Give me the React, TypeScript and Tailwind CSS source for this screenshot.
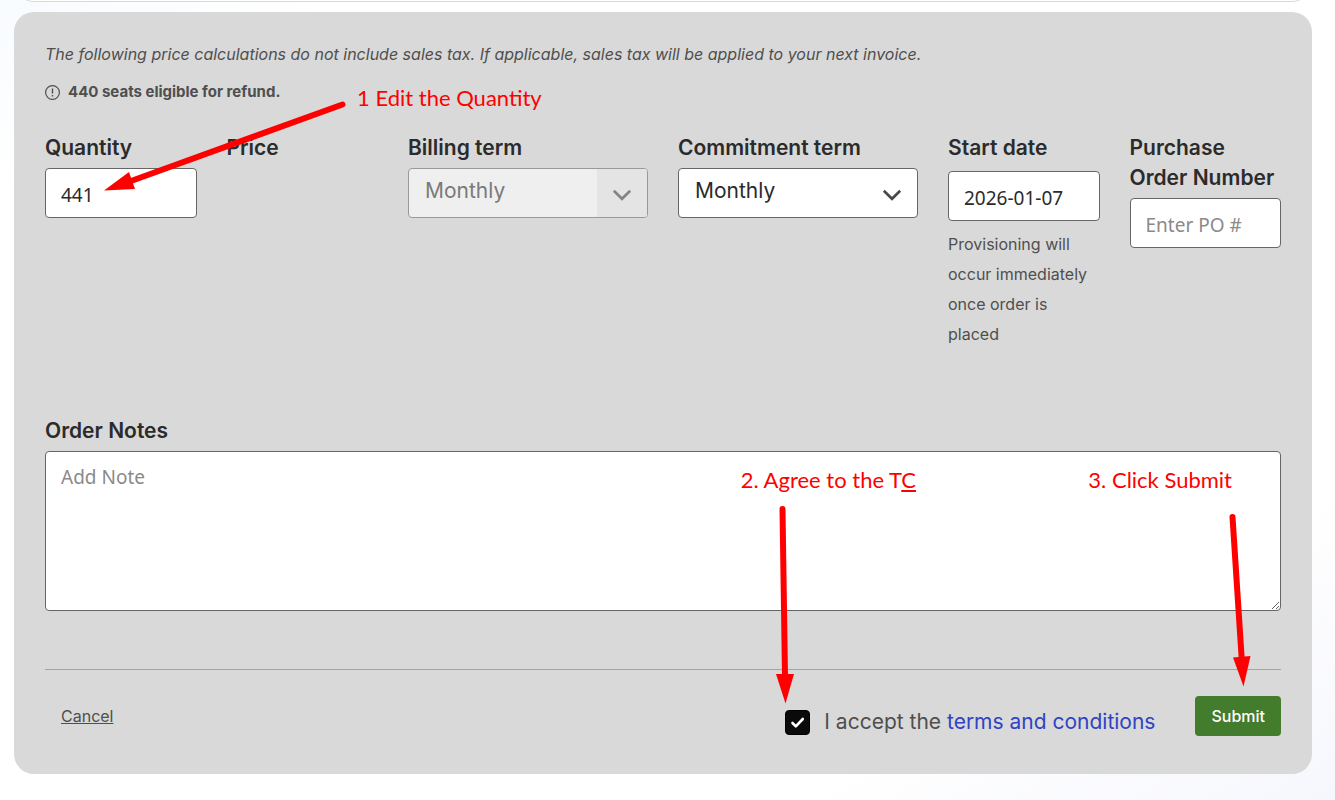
import { useState } from 'react'
import type { ReactNode } from 'react'

const inputClass =
  "h-[50px] w-full rounded border border-[#666] bg-white px-[15px] pt-[3px] font-['Noto_Sans',sans-serif] text-[19px] text-[#2b2b2b] placeholder:text-[#8a8a8a]"

function Field({ id, label, children }: { id: string; label: string; children?: ReactNode }) {
  return (
    <div className="flex min-w-0 flex-col gap-[5px]">
      <label htmlFor={id} className="text-[21px] leading-[30px] font-semibold text-[#2b2b2b]">
        {label}
      </label>
      {children}
    </div>
  )
}

function TermSelect({ id, disabled = false }: { id: string; disabled?: boolean }) {
  return (
    <div
      className={
        disabled
          ? 'relative flex h-[50px] overflow-hidden rounded border border-[#999] bg-[#efefef]'
          : 'relative flex h-[50px] overflow-hidden rounded border border-[#666] bg-white'
      }
    >
      <select
        id={id}
        disabled={disabled}
        defaultValue="monthly"
        className="w-full appearance-none px-4 pb-1 text-[21px] text-[#2b2b2b] disabled:text-[#7a7a7a] disabled:opacity-100"
      >
        <option value="monthly">Monthly</option>
        <option value="annual">Annual</option>
      </select>
      <span
        className={
          disabled
            ? 'pointer-events-none absolute inset-y-0 right-0 flex w-[50px] items-center justify-center bg-[#e4e4e4] pt-1 text-[#858585]'
            : 'pointer-events-none absolute inset-y-0 right-0 flex w-[50px] items-center justify-center pt-1 text-[#4a4a4a]'
        }
      >
        <svg width="20" height="12" viewBox="0 0 20 12" fill="none" aria-hidden="true">
          <path d="M1.800 1.800 10 9.800l8.200-8" stroke="currentColor" strokeWidth="2.700" />
        </svg>
      </span>
    </div>
  )
}

function Steps() {
  const text = "absolute font-['Lato',sans-serif] text-[22px] leading-[28px] whitespace-nowrap text-[#f00]"
  return (
    <div className="pointer-events-none absolute inset-0">
      <p className={`${text} top-[72px] left-[343px]`}>1 Edit the Quantity</p>
      <svg className="absolute top-[84px] left-[86px]" width="250" height="100" viewBox="100 96 250 100" aria-hidden="true">
        <path d="M342.500 104.500 131 181" stroke="#f00" strokeWidth="6" strokeLinecap="round" />
        <path d="M104 190.500 129 172l6 17z" fill="#f00" />
      </svg>

      <p className={`${text} right-[396px] bottom-[280px]`}>
        2. Agree to the T<u>C</u>
      </p>
      <svg className="absolute right-[514px] bottom-[68px]" width="26" height="206" viewBox="772 500 26 206" aria-hidden="true">
        <path d="M782.500 509 785 676" stroke="#f00" strokeWidth="6" strokeLinecap="round" />
        <path d="M776 674h18l-8.500 29.500z" fill="#f00" />
      </svg>

      <p className={`${text} right-[80px] bottom-[280px]`}>3. Click Submit</p>
      <svg className="absolute right-[56px] bottom-[84px]" width="30" height="182" viewBox="1226 508 30 182" aria-hidden="true">
        <path d="M1232.500 517 1241.800 660" stroke="#f00" strokeWidth="6" strokeLinecap="round" />
        <path d="M1233 657.500 1250.500 656l-7 30.500z" fill="#f00" />
      </svg>
    </div>
  )
}

export default function App() {
  const [quantity, setQuantity] = useState('441')
  const [accepted, setAccepted] = useState(true)

  return (
    <main className="min-h-screen bg-white bg-[linear-gradient(150deg,#f8fbfe_0%,#ffffff_12%,#ffffff_80%,#f6f7fd_100%)] pr-[23px] pb-[26px] pl-[14px] font-['Inter',sans-serif] text-[#4f4f4f]">
      {/* bottom edge of the card above */}
      <div className="h-[2px] overflow-hidden">
        <div className="-mt-10 h-[42px] rounded-[20px] border border-[#d9d9d9] bg-white" />
      </div>

      <form
        className="relative mt-[10px] rounded-[20px] bg-[#d9d9d9] px-[31px] pt-[27px] pb-[37px]"
        onSubmit={(e) => e.preventDefault()}
      >
        <p className="text-[16px] leading-[30px] italic">
          The following price calculations do not include sales tax. If applicable, sales tax will be applied to your next
          invoice.
        </p>
        <p className="mt-2 flex items-center gap-2 text-[15px] leading-[30px] font-bold">
          <svg width="15" height="15" viewBox="0 0 15 15" fill="none" stroke="currentColor" aria-hidden="true">
            <circle cx="7.500" cy="7.500" r="6.900" strokeWidth="1.200" />
            <path d="M7.500 3.600v4.900M7.500 9.900v1.500" strokeWidth="1.400" />
          </svg>
          440 seats eligible for refund.
        </p>

        <div className="mt-[26px] grid grid-cols-[1fr_1fr_240px_240px_1fr_1fr] gap-x-[30px]">
          <Field id="quantity" label="Quantity">
            <input id="quantity" className={inputClass} value={quantity} onChange={(e) => setQuantity(e.target.value)} />
          </Field>
          <div className="text-[21px] leading-[30px] font-semibold text-[#2b2b2b]">Price</div>
          <Field id="billing" label="Billing term">
            <TermSelect id="billing" disabled />
          </Field>
          <Field id="commitment" label="Commitment term">
            <TermSelect id="commitment" />
          </Field>
          <Field id="start" label="Start date">
            <div className="pt-[3px]">
              <input id="start" className={inputClass} defaultValue="2026-01-07" />
              <p className="mt-2 text-[16px] leading-[30px]">Provisioning will occur immediately once order is placed</p>
            </div>
          </Field>
          <Field id="po" label="Purchase Order Number">
            <input id="po" className={inputClass} placeholder="Enter PO #" />
          </Field>
        </div>

        <div className="mt-[67px] flex flex-col gap-[5px]">
          <label htmlFor="notes" className="text-[21px] leading-[30px] font-semibold text-[#2b2b2b]">
            Order Notes
          </label>
          <textarea
            id="notes"
            placeholder="Add Note"
            className="block h-40 w-full rounded border border-[#666] bg-white px-[15px] py-[11px] font-['Noto_Sans',sans-serif] text-[19px] leading-[28px] placeholder:text-[#8a8a8a]"
          />
        </div>

        <div className="mt-[58px] flex items-start justify-between border-t border-[#a3a3a3] pt-[26px]">
          <button type="button" className="h-10 px-4 text-[16px] underline">
            Cancel
          </button>
          <div className="flex items-start gap-10">
            <div className="flex items-center gap-[14px] pt-[11px] text-[21px] leading-[30px]">
              <span className="relative flex">
                <input
                  id="terms"
                  type="checkbox"
                  checked={accepted}
                  onChange={(e) => setAccepted(e.target.checked)}
                  className="size-[25px] appearance-none rounded border border-black bg-white checked:bg-[#0a0a0a]"
                />
                {accepted && (
                  <svg className="pointer-events-none absolute inset-0" width="25" height="25" viewBox="0 0 25 25" fill="none" aria-hidden="true">
                    <path d="m7.500 13 3.300 3.300 7-7.300" stroke="#fff" strokeWidth="2.600" strokeLinecap="round" strokeLinejoin="round" />
                  </svg>
                )}
              </span>
              <label htmlFor="terms">
                I accept the{' '}
                <a href="#terms" className="text-[#2f43c4]">
                  terms and conditions
                </a>
              </label>
            </div>
            <button type="submit" className="h-10 rounded bg-[#437c2c] px-4 text-[16px] font-medium text-white">
              Submit
            </button>
          </div>
        </div>

        <Steps />
      </form>
    </main>
  )
}
